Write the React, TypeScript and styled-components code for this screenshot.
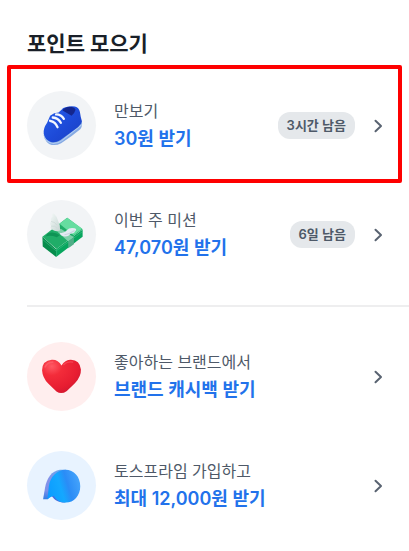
import React from "react";
import styled, { createGlobalStyle } from "styled-components";

const GlobalStyle = createGlobalStyle`
  * { box-sizing: border-box; }
  body {
    margin: 0;
    background: #fff;
    font-family: Inter, "Noto Sans CJK KR", sans-serif;
  }
`;

const Page = styled.main`
  padding: 28px 0 11px;
`;

const Title = styled.h1`
  margin: 0 27px 11px;
  color: #191f28;
  font-size: 21px;
  font-weight: 700;
  line-height: 32px;
`;

const List = styled.ul`
  margin: 0;
  padding: 0;
  list-style: none;
`;

const Item = styled.li<{ $highlighted?: boolean }>`
  position: relative;

  &::after {
    content: "";
    display: ${(p) => (p.$highlighted ? "block" : "none")};
    position: absolute;
    inset: -6px 7px -3px;
    border: 4px solid #fe0000;
    border-radius: 2px;
    pointer-events: none;
  }
`;

const RowLink = styled.a`
  display: flex;
  align-items: center;
  min-height: 109px;
  padding: 0 26px 0 27px;
  color: inherit;
  text-decoration: none;
`;

const Avatar = styled.span<{ $tint: string }>`
  flex: none;
  width: 69px;
  height: 69px;
  border-radius: 50%;
  background: ${(p) => p.$tint};

  svg { display: block; width: 100%; height: 100%; }
`;

const Texts = styled.span`
  flex: 1;
  min-width: 0;
  display: flex;
  flex-direction: column;
  margin-left: 18px;
`;

const Caption = styled.span`
  color: #4e5968;
  font-size: 16px;
  line-height: 26px;
`;

const Reward = styled.span`
  color: #2272eb;
  font-size: 18px;
  font-weight: 600;
  line-height: 30px;
`;

const Badge = styled.span`
  flex: none;
  margin-right: 19px;
  padding: 0 9px;
  border-radius: 12px;
  background: #e5e8eb;
  color: #4e5968;
  font-size: 13px;
  font-weight: 600;
  line-height: 27px;
`;

const Chevron = styled.svg`
  flex: none;
  width: 9px;
  height: 14px;
`;

const Divider = styled.hr`
  height: 2px;
  margin: 16px 0 15px 27px;
  border: 0;
  background: #eeeeef;
`;

const ShoeIcon = () => (
  <svg viewBox="22 20 206 206" aria-hidden="true">
    <defs>
      <linearGradient id="shoe" x1="0" y1="0" x2="1" y2="1">
        <stop offset="0" stopColor="#2a62ec" />
        <stop offset=".55" stopColor="#1d4ad8" />
        <stop offset="1" stopColor="#1a3fc0" />
      </linearGradient>
    </defs>
    <path d="M72 146Q71 166 88 178Q105 186 124 176Q155 156 181 134Q188 126 186 110L150 130L100 166Z" fill="#86aae3" />
    <path d="M73 152Q78 174 101 177Q113 177 126 168L186 120" fill="none" stroke="#b3cdf1" strokeWidth="3" />
    <path d="M91 94Q103 84 116 84Q124 78 130 71Q147 63 165 66Q178 70 180 83Q182 99 186 110Q184 120 174 128L122 166Q108 175 93 172Q75 166 72 147Q70 132 82 115Z" fill="url(#shoe)" />
    <path d="M128 78Q133 69 148 67Q164 67 167 76Q164 87 155 94Q143 86 128 78Z" fill="#14268d" />
    <g fill="none" stroke="#f4f8ff" strokeWidth="7" strokeLinecap="round">
      <path d="M109 90Q124 90 132 103" />
      <path d="M99 99Q115 100 123 115" />
      <path d="M91 109Q107 112 113 128" />
    </g>
  </svg>
);

const CashIcon = () => (
  <svg viewBox="22 17 206 206" aria-hidden="true">
    <defs>
      <linearGradient id="wing" x1="0" y1="0" x2="1" y2="1">
        <stop offset="0" stopColor="#f3f8f7" />
        <stop offset="1" stopColor="#c7d6d3" />
      </linearGradient>
    </defs>
    <path d="M68 127L109 164V187L69 156Z" fill="#078d4c" />
    <path d="M109 164L188 105V127L109 187Z" fill="#08a65e" />
    <path d="M68 127L142 70L188 104L110 163Z" fill="#20ad68" />
    <path d="M119 88L142 70L187 103L161 122Z" fill="#66dda0" />
    <path d="M70 136L109 169L187 112" fill="none" stroke="#39bc80" strokeWidth="2" />
    <path d="M112 111L123 103L162 128L145 141Z" fill="#7fd0aa" />
    <path d="M145 141L162 128V149L145 161Z" fill="#50ae87" />
    <path d="M85 116Q104 110 120 122L111 128Q93 121 78 125Z" fill="#0e9455" />
    <path d="M121 108Q108 113 98 106Q89 100 94 95Q88 86 94 81Q91 70 98 67Q95 55 103 58Q114 69 115 80Q122 91 121 108Z" fill="url(#wing)" />
    <path d="M94 81Q106 82 111 92M94 95Q106 93 112 101" fill="none" stroke="#cbd8d5" strokeWidth="2" />
    <path d="M120 115Q132 118 141 107Q148 98 164 101Q173 104 165 111Q163 117 151 118Q147 127 134 126Q121 125 120 115Z" fill="#e3eaf2" />
    <path d="M134 121Q149 119 164 108" fill="none" stroke="#c9d5df" strokeWidth="3" />
  </svg>
);

const HeartIcon = () => (
  <svg viewBox="22 20 206 206" aria-hidden="true">
    <defs>
      <radialGradient id="heart" cx=".25" cy=".2" r=".9">
        <stop offset="0" stopColor="#ff5963" />
        <stop offset=".3" stopColor="#f32c3a" />
        <stop offset=".75" stopColor="#e71d31" />
        <stop offset="1" stopColor="#cf1730" />
      </radialGradient>
    </defs>
    <path d="M125 90Q115 72 96 73Q68 75 67 104Q68 126 86 145L110 168Q125 178 141 166L165 143Q184 123 183 102Q180 74 153 73Q135 73 125 90Z" fill="url(#heart)" />
    <path d="M76 94Q83 80 99 80" fill="none" stroke="#ff707a" strokeWidth="5" strokeLinecap="round" opacity=".5" />
    <path d="M132 87Q143 77 158 80" fill="none" stroke="#ff6471" strokeWidth="4" strokeLinecap="round" opacity=".5" />
  </svg>
);

const PrimeIcon = () => (
  <svg viewBox="22 17 206 206" aria-hidden="true">
    <defs>
      <linearGradient id="primeFace" x1="0" y1=".65" x2="1" y2=".35">
        <stop offset="0" stopColor="#0c9cff" />
        <stop offset=".4" stopColor="#14a8ff" />
        <stop offset=".62" stopColor="#2b8cf6" />
        <stop offset="1" stopColor="#46a4fb" />
      </linearGradient>
      <linearGradient id="primeEdge" x1="0" y1="0" x2="0" y2="1">
        <stop offset="0" stopColor="#6aa6ec" />
        <stop offset=".3" stopColor="#8492e9" />
        <stop offset=".7" stopColor="#7d8fe8" />
        <stop offset="1" stopColor="#327de4" />
      </linearGradient>
    </defs>
    <path d="M139 73H120C96 76 81 98 76 126L70 161H84L120 120Z" fill="url(#primeEdge)" />
    <path d="M95 150L102 147L138 171H127C110 168 101 160 95 150Z" fill="#4a68dc" />
    <path d="M83 161L87 124C91 93 112 73 137 73C162 73 181 94 181 122C181 150 162 171 138 171C122 171 110 164 102 151C95 152 88 156 83 161Z" fill="url(#primeFace)" />
  </svg>
);

type Entry = {
  caption: string;
  reward: string;
  tint: string;
  Icon: () => React.JSX.Element;
  badge?: string;
  highlighted?: boolean;
};

const missions: Entry[] = [
  { caption: "만보기", reward: "30원 받기", tint: "#f2f4f6", Icon: ShoeIcon, badge: "3시간 남음", highlighted: true },
  { caption: "이번 주 미션", reward: "47,070원 받기", tint: "#f2f4f6", Icon: CashIcon, badge: "6일 남음" },
];

const benefits: Entry[] = [
  { caption: "좋아하는 브랜드에서", reward: "브랜드 캐시백 받기", tint: "#ffeeee", Icon: HeartIcon },
  { caption: "토스프라임 가입하고", reward: "최대 12,000원 받기", tint: "#e8f3ff", Icon: PrimeIcon },
];

const PointList = ({ entries }: { entries: Entry[] }) => (
  <List>
    {entries.map(({ caption, reward, tint, Icon, badge, highlighted }) => (
      <Item key={caption} $highlighted={highlighted}>
        <RowLink href="#">
          <Avatar $tint={tint}><Icon /></Avatar>
          <Texts>
            <Caption>{caption}</Caption>
            <Reward>{reward}</Reward>
          </Texts>
          {badge && <Badge>{badge}</Badge>}
          <Chevron viewBox="0 0 9 14" aria-hidden="true">
            <path d="M1.5 1.8L7 7L1.5 12.2" fill="none" stroke="#596371" strokeWidth="2" strokeLinecap="round" strokeLinejoin="round" />
          </Chevron>
        </RowLink>
      </Item>
    ))}
  </List>
);

export default function App() {
  return (
    <>
      <GlobalStyle />
      <Page lang="ko">
        <Title>포인트 모으기</Title>
        <PointList entries={missions} />
        <Divider />
        <PointList entries={benefits} />
      </Page>
    </>
  );
}
